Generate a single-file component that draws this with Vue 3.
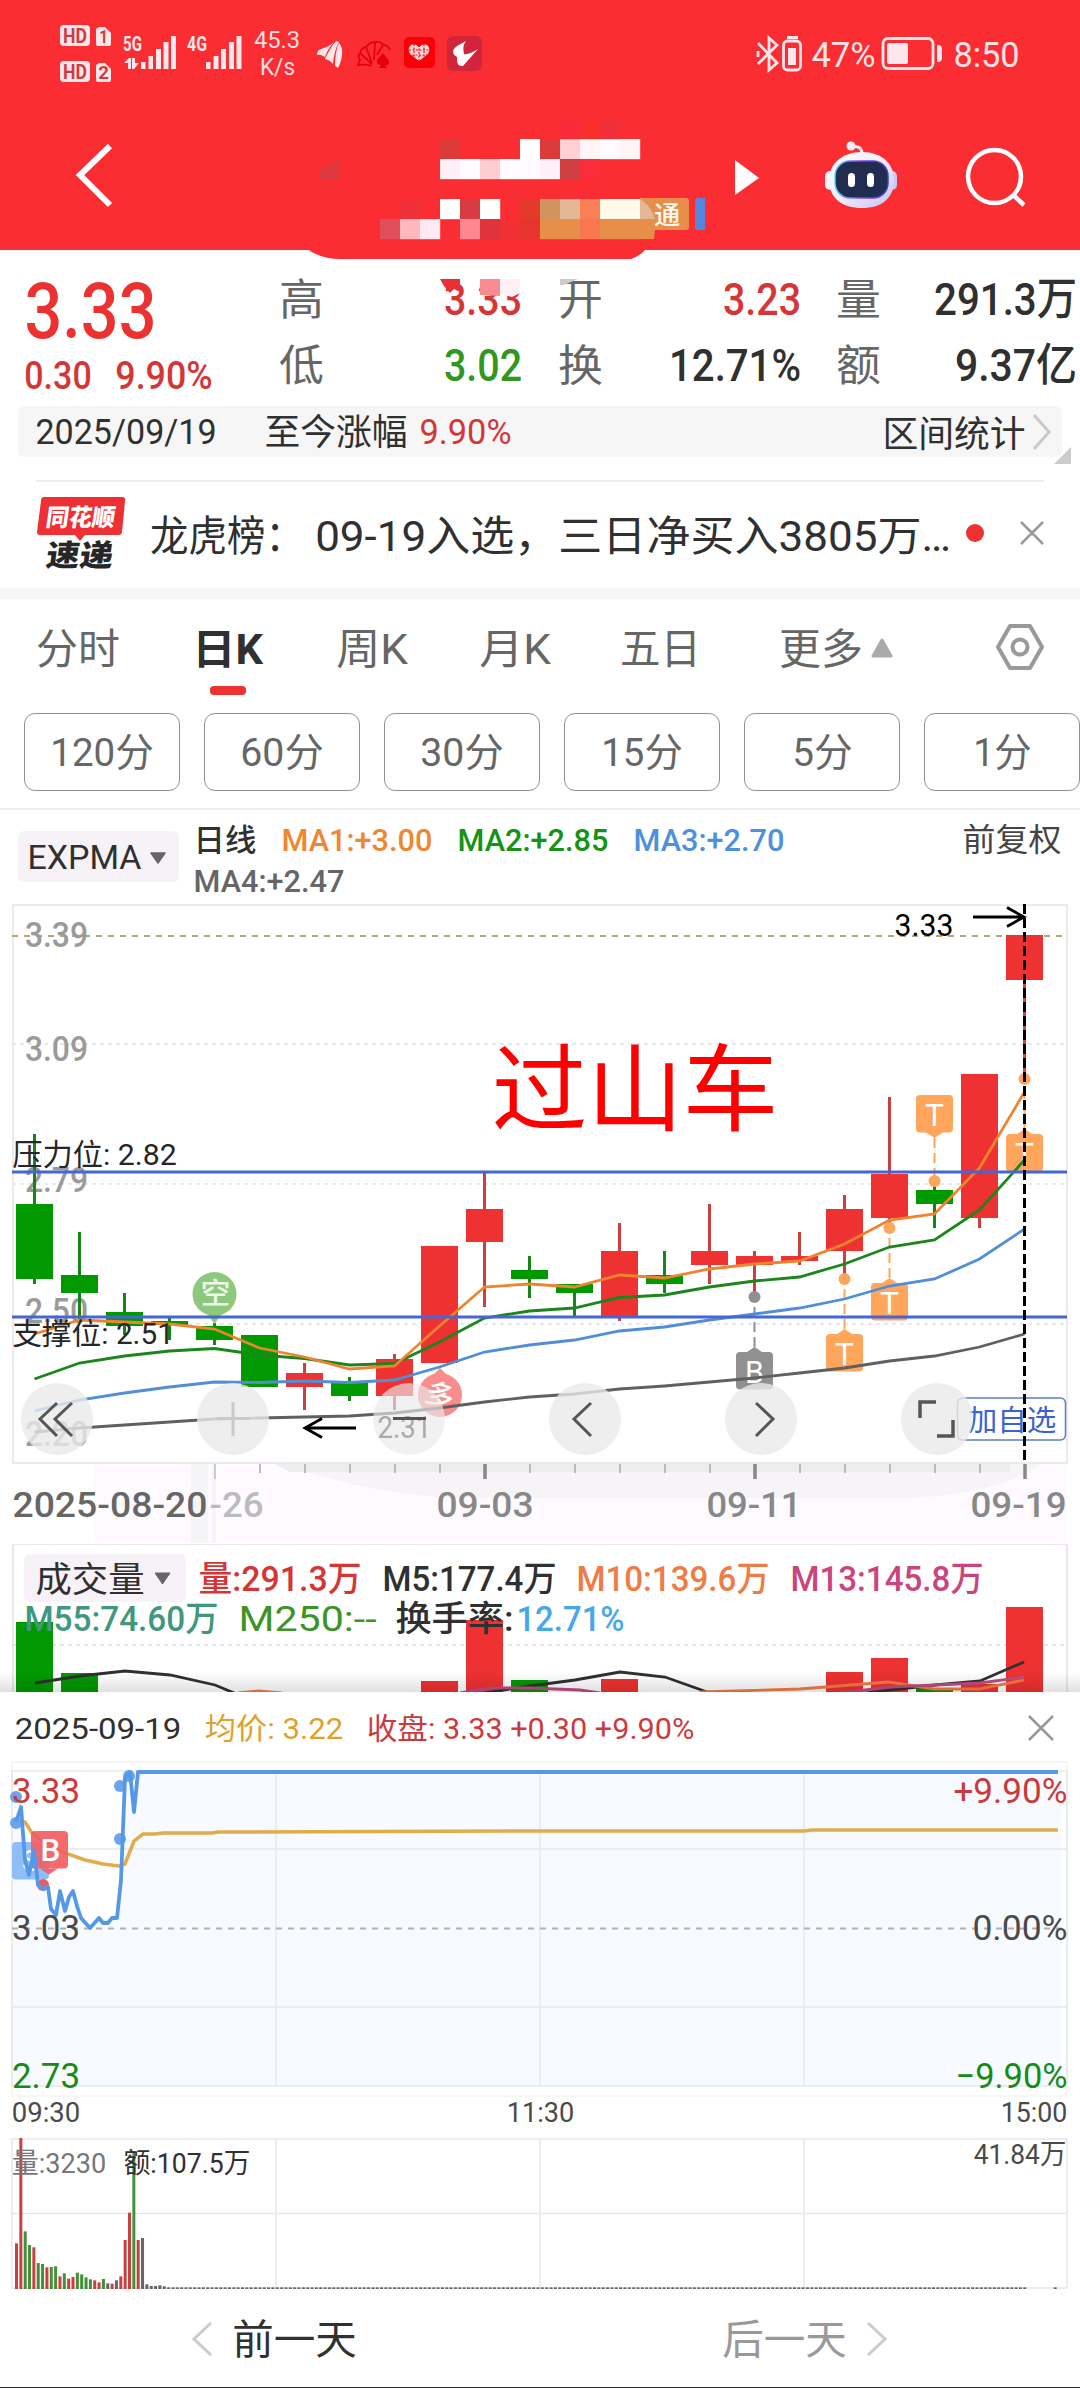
<script setup>
import { h } from 'vue'

/* Text set to an exact drawn width; x/y are the left edge and the baseline. */
const Txt = (p) =>
  h('text', {
    x: p.x - p.s * 0.045,
    y: p.y,
    'font-size': p.s,
    'font-weight': p.b || 400,
    fill: p.c || '#303030',
    textLength: p.w + p.s * 0.09,
    lengthAdjust: 'spacingAndGlyphs',
    'xml:space': 'preserve',
  }, p.t)
Txt.props = ['t', 'x', 'y', 'w', 's', 'c', 'b']

/* Inline box whose height is the cap height of its text. */
const Fit = (p) => {
  const cap = Math.round(p.s * 0.711)
  return h('svg', { width: p.w, height: cap, style: { overflow: 'visible', display: 'block', flex: 'none' } }, [
    h(Txt, { t: p.t, x: 0, y: cap, w: p.w, s: p.s, c: p.c, b: p.b }),
  ])
}
Fit.props = ['t', 'w', 's', 'c', 'b']

const RED = '#ee3131'
const GREEN = '#009900'
const G = '#666'

const mosaic = [
  [440, 139, '#dd3a3a'], [520, 139, '#fff'], [540, 139, '#dd3a3c'], [560, 139, '#ffcfd4'], [580, 139, '#fff5f7'], [600, 139, '#fffafd'], [620, 139, '#fff5f7'],
  [560, 119, '#f92b38'], [580, 119, '#f92f2e'], [600, 119, '#ef3038'],
  [440, 159, '#fff0f8'], [460, 159, '#fffaff'], [480, 159, '#ffcdd0'], [500, 159, '#fffaff'], [520, 159, '#fffaff'], [540, 159, '#fff0f8'], [560, 159, '#cf4045'], [580, 159, '#fb2d3a'],
  [400, 199, '#f03038'], [440, 199, '#fff'], [460, 199, '#d73c42'], [480, 199, '#fff'], [520, 199, '#e5392a'],
  [380, 219, '#de4f5b'], [400, 219, '#ffb8be'], [420, 219, '#ffe8f0'], [460, 219, '#ff8890'], [480, 219, '#de343b'], [500, 219, '#f03133'], [520, 219, '#e6352f'],
  [540, 199, '#d3935f'], [560, 199, '#e3b795'], [580, 199, '#f88054'], [600, 199, '#fff9e8'], [620, 199, '#fff9e8'],
  [540, 219, '#e78e4a'], [560, 219, '#e78e4a'], [580, 219, '#f9774f'], [600, 219, '#e78e4a'], [620, 219, '#e78e4a'],
]

const quotes = [
  [['高', 41, '3.33', 74, '#d43638'], ['开', 41, '3.23', 74, '#d43638'], ['量', 41, '291.3万', 139, '#303030']],
  [['低', 41, '3.02', 74, '#32961f'], ['换', 41, '12.71%', 128, '#303030'], ['额', 41, '9.37亿', 118, '#303030']],
]

const tabs = [['分时', 80], ['日K', 67], ['周K', 68], ['月K', 68], ['五日', 77], ['更多', 80]]
const periods = [['120分', 100], ['60分', 80], ['30分', 80], ['15分', 78], ['5分', 57], ['1分', 55]]

/* index, up?, body top, body bottom, wick top, wick bottom */
const candles = [
  [0, 0, 1204, 1279, 1134, 1284], [1, 0, 1275, 1293, 1232, 1321], [2, 0, 1312, 1326, 1293, 1335], [3, 0, 1321, 1325, 1318, 1340],
  [4, 0, 1326, 1340, 1323, 1345], [5, 0, 1335, 1387, 1335, 1387], [6, 1, 1373, 1387, 1363, 1410], [7, 0, 1383, 1396, 1377, 1401],
  [8, 1, 1359, 1396, 1354, 1410], [9, 1, 1246, 1363, 1246, 1363], [10, 1, 1209, 1242, 1173, 1307], [11, 0, 1270, 1279, 1256, 1298],
  [12, 0, 1284, 1293, 1284, 1316], [13, 1, 1251, 1316, 1223, 1321], [14, 0, 1275, 1284, 1251, 1293], [15, 1, 1251, 1265, 1204, 1284],
  [16, 1, 1256, 1265, 1251, 1297], [17, 1, 1256, 1261, 1232, 1265], [18, 1, 1209, 1251, 1195, 1279], [19, 1, 1174, 1218, 1097, 1228],
  [20, 0, 1190, 1204, 1181, 1228], [21, 1, 1074, 1218, 1074, 1228], [22, 1, 935, 980, 935, 1079],
].map(([i, up, a, b, t, z]) => ({ x: 34.5 + 45 * i, col: up ? RED : GREEN, wick: up ? '#cb3f3f' : '#168516', a, b, t, z }))

const line = (a) => a.map((y, i) => `${34.5 + 45 * i},${y}`).join(' ')
const mas = [
  ['#606060', line([1432, 1428, 1425, 1422, 1419, 1418, 1417, 1416, 1413, 1408, 1402, 1397, 1394, 1389, 1386, 1382, 1378, 1373, 1368, 1361, 1356, 1347, 1334])],
  ['#508fd8', line([1411, 1400, 1393, 1387, 1382, 1382.5, 1381, 1382.5, 1380, 1367, 1352, 1345, 1340, 1331, 1327, 1320, 1314, 1308, 1299, 1286, 1279, 1259, 1229])],
  ['#1b861b', line([1379, 1363, 1356, 1351, 1348.5, 1355, 1358.5, 1365, 1363.5, 1342, 1318, 1311, 1308, 1297.5, 1295, 1287, 1281, 1277, 1264, 1247, 1240, 1210, 1160])],
  ['#ee8430', line([1334, 1320, 1322, 1324, 1329, 1348, 1357, 1369, 1366, 1326, 1287, 1284, 1287, 1275, 1278, 1269, 1264, 1261, 1244, 1220, 1214, 1168, 1092])],
]
const scale = [['3.39', 947], ['3.09', 1061], ['2.79', 1192], ['2.50', 1323], ['2.20', 1446]]

/* badge left, badge top, letter, colour, dot y, tail direction */
const marks = [
  [916, 1095, 'T', '#ffa55c', 1181, 1], [1006, 1134, 'T', '#ffa55c', 1079, -1], [871, 1283, 'T', '#ffa55c', 1228, -1],
  [826, 1334, 'T', '#ffa55c', 1279, -1], [736, 1352, 'B', '#909090', 1297, -1],
].map(([x, y, t, c, d, s]) => ({ x, y, t, c, d, cx: x + 18.5, edge: s > 0 ? y + 37 : y + 1, tip: s > 0 ? y + 43 : y - 5 }))

const ticks = Array.from({ length: 19 }, (_, k) => k + 4).map((i) => ({ x: 35 + 45 * i, big: i > 4 && (i - 4) % 6 === 0, first: i === 4 }))

const volumes = [[0, 0, 1622], [1, 0, 1673], [9, 1, 1681], [10, 1, 1620], [11, 0, 1680], [13, 1, 1679], [18, 1, 1672], [19, 1, 1658], [20, 0, 1688], [21, 1, 1684], [22, 1, 1607]]

const price = '16,1822 21,1807 25,1860 29,1875 34,1850 38,1885 43,1889 48,1887 51,1909 56,1915 60,1891 65,1911 69,1897 73,1891 77,1906 81,1918 90,1928 99,1918 103,1923 108,1923 112,1918 117,1918 121,1880 125,1778 130,1772 134,1812 138,1772 1058,1772'
const average = '16,1822 25,1822 32,1833 45,1843 65,1853 85,1860 103,1864 119,1866 125,1864 134,1841 143,1834 155,1834 163,1833 212,1833 218,1832 540,1831 804,1831 812,1830 1058,1830'

const head = 'r490 r174 g454 g495 r502 g549 g552 r562 g561 g559 r589 g580 r596 r591 g578 g583 g592 g598 r601 r607 g597 k610 r611 k601 r589 r480 r398 g215 r480 k474 k613 k618 k618 k616 k619'.split(' ')
const minuteBars = Array.from({ length: 240 }, (_, i) => {
  const s = head[i] || 'k622'
  return { x: 15 + i * 4.346, y: 2080 + Number(s.slice(1)) / 3, c: { r: '#c84040', g: '#44903a', k: '#666' }[s[0]], i }
}).filter((b) => b.i < 233 || b.i === 239)
</script>

<template>
  <div class="app">
    <header class="top">
      <div class="status">
        <svg width="500" height="105" viewBox="0 0 500 105">
          <g fill="#ffe6ea">
            <rect x="60" y="25" width="30" height="21" rx="4" /><rect x="60" y="61" width="30" height="21" rx="4" />
            <path d="M99 27h6l6 6v11a2 2 0 0 1-2 2H98a2 2 0 0 1-2-2V29zM99 63h6l6 6v11a2 2 0 0 1-2 2H98a2 2 0 0 1-2-2V65z" />
            <path d="M141 62h4.500v7H141zM148.500 56h4.500v13h-4.500zM156 49h5v20h-5zM163.500 42h5v27h-5zM171 36h5v33h-5zM206 62h4.500v7H206zM213.500 56h5v13h-5zM221 49h5v20h-5zM229 42h5v27h-5zM236.500 36h5v33h-5z" />
            <path d="M124 63l5-5h2v11h-3v-6zM132 58h3v5l4 0-5 6h-2z" />
            <path d="M317 55q0-5 4-6 8-2 13-7-7 8-9 15-5-3-8-2zM325 59q5-11 11-18l3 1q-5 9-6 22-3-4-8-5zM335 66q0-15 4-23 4 4 3 12-1 8-4 13-1-1-3-2z" />
          </g>
          <Txt t="HD" :x="64" :y="43" :w="22" :s="21" b="700" c="#cf3a40" /><Txt t="HD" :x="64" :y="79" :w="22" :s="21" b="700" c="#cf3a40" />
          <Txt t="1" :x="100" :y="43" :w="7" :s="19" b="700" c="#cf3a40" /><Txt t="2" :x="99" :y="79" :w="9" :s="19" b="700" c="#cf3a40" />
          <Txt t="5G" :x="124" :y="51" :w="17" :s="21" b="700" c="#ffe6ea" /><Txt t="4G" :x="188" :y="51" :w="18" :s="21" b="700" c="#ffe6ea" />
          <Txt t="45.3" :x="255" :y="48" :w="44" :s="23.500" c="#ffdfe2" /><Txt t="K/s" :x="261" :y="75" :w="33" :s="23.500" c="#ffdfe2" />
          <g fill="none" stroke="#e6000c" stroke-width="1.800">
            <path d="M372 66q-7-2-14-1l2-5q-3-3 0-7 1-5 6-6 4-5 9-5 6-1 8 3 5 0 7 5M360 53l12 11M366 47l6 16M375 42l-1 18M383 45l-6 10" />
          </g>
          <path d="M383 53l6 8q1 5-4 4l2 3h-8l2-3q-5 0-4-5z" fill="#e6000c" />
          <rect x="404" y="37" width="31" height="31" rx="5" fill="#fa0006" />
          <path d="M419 61l-9-7q-3-6 1-9 4-2 8 2 4-4 8-2 4 3 1 9z" fill="#ffd9da" /><path d="M409 50h21M412 55h15M414 44v13M419 45v16M424 44v13" stroke="#fa0006" stroke-width="1.200" stroke-dasharray="2 1.500" />
          <rect x="447" y="36" width="35" height="35" rx="6" fill="#d0253a" />
          <path d="M466 41q-4 5-2 13 5 1 14-5l-15 17q-7 1-6-9-8-5 0-11z" fill="#fff" />
        </svg>
        <svg width="340" height="105" viewBox="740 0 340 105">
          <g fill="none" stroke="#ffe6ea" stroke-width="2.800">
            <path d="M758 43l19 20-8 7V38l8 7-19 19M758 51v6" />
            <rect x="783.500" y="41" width="17" height="29" rx="4" />
            <rect x="883" y="38.500" width="50" height="30" rx="5" />
          </g>
          <path fill="#ffe6ea" d="M787 36h11v3h-11zM788 48h8v17h-8zM889 43h17a2 2 0 0 1 2 2v17a2 2 0 0 1-2 2h-17a2 2 0 0 1-2-2V45a2 2 0 0 1 2-2zM937 45h1a4 4 0 0 1 4 4v9a4 4 0 0 1-4 4h-1z" />
          <Txt t="47%" :x="813" :y="67" :w="61" :s="35" c="#ffe3e6" /><Txt t="8:50" :x="955" :y="67" :w="63" :s="35" c="#ffe3e6" />
        </svg>
      </div>
      <nav class="nav">
        <svg width="290" height="145" viewBox="0 105 290 145"><path d="M110 146L80 175l30 30" fill="none" stroke="#fff" stroke-width="6" /></svg>
        <svg class="title" width="430" height="145" viewBox="290 105 430 145">
          <path d="M307 249q14 10 33 10h291q9-3 15-10z" fill="#f92d32" />
          <path d="M320 179v-9l20-11v20z" fill="#db3a41" />
          <path d="M640 198h46a3 3 0 0 1 3 3v26a3 3 0 0 1-3 3h-32v-11h-14z" fill="#e78e4a" />
          <rect v-for="(m, i) in mosaic" :key="i" :x="m[0]" :y="m[1]" width="20.200" height="20.200" :fill="m[2]" />
          <path d="M640 199q10 5 15 20h-15z" fill="#e3b795" /><path d="M640 219h15v11l-1 9h-14z" fill="#e78e4a" />
          <Txt t="通" :x="655" :y="223.500" :w="24" :s="25" b="500" c="#fff9ef" />
          <path d="M698 198h7v32h-7a3 3 0 0 1-3-3v-26a3 3 0 0 1 3-3z" fill="#5585dc" />
        </svg>
        <svg width="80" height="145" viewBox="720 105 80 145"><path d="M735 160l24 18-24 17z" fill="#fff" /></svg>
        <svg width="140" height="145" viewBox="800 105 140 145">
          <defs>
            <linearGradient id="shell" x1="0" y1="0" x2="1" y2="1"><stop offset="0" stop-color="#fff" /><stop offset=".5" stop-color="#f2edfb" /><stop offset="1" stop-color="#c9bff0" /></linearGradient>
            <linearGradient id="rim" x1="0" y1="0" x2="1" y2="0"><stop offset="0" stop-color="#5ad2f5" /><stop offset=".5" stop-color="#8a3ff0" /><stop offset="1" stop-color="#3540d0" /></linearGradient>
          </defs>
          <path d="M852 147q10-2 10 7" fill="none" stroke="#f4e9f7" stroke-width="3" /><circle cx="851" cy="146" r="4.500" fill="#f8eef8" />
          <rect x="825" y="171" width="12" height="19" rx="5" fill="#f5f2fd" /><rect x="885" y="171" width="12" height="19" rx="5" fill="#cfc6f2" />
          <path d="M862 152c20 0 32 12 32 28 0 18-12 28-32 28s-33-10-33-28c0-16 13-28 33-28z" fill="url(#shell)" />
          <rect x="835" y="161" width="53" height="37" rx="15" fill="#202c50" stroke="url(#rim)" stroke-width="1.500" />
          <rect x="848" y="173" width="7" height="14" rx="3.500" fill="#fff" /><rect x="867" y="173" width="7" height="14" rx="3.500" fill="#fff" />
        </svg>
        <svg width="140" height="145" viewBox="940 105 140 145"><g fill="none" stroke="#fff" stroke-width="4.500"><circle cx="994.500" cy="176.500" r="26.500" /><path d="M1012 194l12 11" /></g></svg>
      </nav>
    </header>

    <section class="quote">
      <div class="last">
        <Fit t="3.33" :w="125" :s="77" b="500" c="#ec3131" />
        <div class="change"><Fit t="0.30" :w="64" :s="38" b="500" c="#d43638" /><Fit t="9.90%" :w="94" :s="38" b="500" c="#d43638" /></div>
      </div>
      <div class="grid">
        <div v-for="(r, k) in quotes" :key="k" class="grow">
          <div v-for="q in r" :key="q[0]" class="pair"><Fit :t="q[0]" :w="q[1]" :s="43" :c="G" /><Fit :t="q[2]" :w="q[3]" :s="45" b="500" :c="q[4]" /></div>
        </div>
      </div>
      <svg class="smudge" width="140" height="18" viewBox="440 279 140 18"><path d="M440 279h20v13l-6-3-4 4-6-7z" fill="#e83035" /><path d="M480 279h20v17l-20-1z" fill="#f88c92" /><path d="M500 279h20v14l-8 4-12-3z" fill="#fff0f5" /><path d="M560 279h18l-14 6h-4z" fill="#ccc" /></svg>
    </section>

    <section class="range">
      <div class="rangebar">
        <Fit t="2025/09/19" :w="178" :s="35" /><Fit t="至今涨幅" :w="140" :s="36" /><Fit t="9.90%" :w="89" :s="35" c="#d43638" />
        <Fit class="stat" t="区间统计" :w="140" :s="36" />
        <svg width="22" height="36" viewBox="1034 414 22 36"><path d="M1036 415l15 17-15 17" fill="none" stroke="#c8c8c8" stroke-width="3" /></svg>
      </div>
      <svg class="corner" width="17" height="17"><path d="M0 17L17 0v17z" fill="#ccc" /></svg>
    </section>

    <section class="news">
      <svg width="90" height="74" viewBox="36 496 90 74">
        <path d="M44 497h78q4 0 3 4l-3 31q0 3-4 3H85l-5 6-5-6H40q-3 0-3-3l4-31q0-4 3-4z" fill="#ee3034" />
        <g transform="skewX(-8)"><Txt t="同花顺" :x="120" :y="526" :w="67" :s="24" b="900" c="#fff" /><Txt t="速递" :x="126" :y="566" :w="64" :s="30" b="900" c="#262626" /></g>
      </svg>
      <Fit class="headline" t="龙虎榜：" :w="150" :s="42" />
      <Fit class="headline rest" t="09-19入选，三日净买入3805万…" :w="632" :s="42" />
      <i class="dot"></i>
      <svg width="24" height="24"><path d="M1 1l22 22M23 1L1 23" stroke="#999" stroke-width="2.500" /></svg>
    </section>

    <section class="tabs">
      <div v-for="(t, i) in tabs" :key="t[0]" class="tab">
        <Fit :t="t[0]" :w="t[1]" :s="42" :b="i === 1 ? 700 : 400" :c="i === 1 ? '#303030' : G" /><i v-if="i === 1"></i>
      </div>
      <svg width="24" height="20"><path d="M12 2l9 16H3z" fill="#aaa" stroke="#aaa" stroke-width="3" stroke-linejoin="round" /></svg>
      <svg class="gear" width="50" height="50" viewBox="0 0 50 50"><g fill="none" stroke="#999" stroke-width="4"><path d="M15 4h20l12 21-12 21H15L3 25z" stroke-linejoin="round" /><circle cx="25" cy="25" r="7.500" /></g></svg>
    </section>

    <section class="periods"><div v-for="p in periods" :key="p[0]" class="period"><Fit :t="p[0]" :w="p[1]" :s="39" :c="G" /></div></section>

    <section class="legend">
      <div class="pick"><Fit t="EXPMA" :w="111" :s="33" /><svg width="18" height="12"><path d="M2 1h14l-7 10z" fill="#666" stroke="#666" stroke-width="1.500" stroke-linejoin="round" /></svg></div>
      <div class="mas">
        <div class="marow"><Fit t="日线" :w="60" :s="31" b="500" /><Fit t="MA1:+3.00" :w="148" :s="32" b="500" c="#ee8730" /><Fit t="MA2:+2.85" :w="148" :s="32" b="500" c="#159315" /><Fit t="MA3:+2.70" :w="148" :s="32" b="500" c="#4f90dc" /></div>
        <Fit t="MA4:+2.47" :w="148" :s="32" b="500" :c="G" />
      </div>
      <Fit class="adj" t="前复权" :w="96" :s="32" c="#444" />
    </section>

    <svg class="block" width="1080" height="640" viewBox="0 904 1080 640">
      <path d="M95 1464h972v79H95z" fill="#fefaff" /><path d="M275 1464h765q-40 30-130 34H450q-60-4-110-17z" fill="#f6f4f6" /><path d="M191 1464h17v79h-17zM212 1464h4v79h-4z" fill="#f5f4f6" /><path d="M275 1464h735v8H290z" fill="#eeecef" />
      <path d="M13 1463V905H1067V1463z" fill="#fff" stroke="#ebebeb" stroke-width="2" />
      <path d="M12 936H1067" stroke="#b5a878" stroke-width="2" stroke-dasharray="6 6" />
      <path d="M12 1044H1067M12 1184H1067M12 1324H1067" stroke="#e9e9e9" stroke-width="2" stroke-dasharray="4 4" />
      <Txt v-for="s in scale" :key="s[0]" :t="s[0]" :x="26.500" :y="s[1]" :w="60" :s="35.500" b="500" c="#9a9a9a" />
      <g v-for="c in candles" :key="c.x"><path :d="`M${c.x} ${c.t}V${c.z}`" :stroke="c.wick" stroke-width="3" /><rect :x="c.x - 18.500" :y="c.a" width="37" :height="c.b - c.a" :fill="c.col" /></g>
      <g v-for="m in marks" :key="m.x">
        <path :d="`M${m.cx} ${m.tip}V${m.d}`" :stroke="m.c" stroke-width="2" stroke-dasharray="10 5" /><circle :cx="m.cx" :cy="m.d" r="6" :fill="m.c" />
        <path :d="`M${m.cx - 9} ${m.edge}L${m.cx} ${m.tip}L${m.cx + 9} ${m.edge}z`" :fill="m.c" /><rect :x="m.x" :y="m.y" width="37" height="37.500" rx="4" :fill="m.c" />
        <Txt :t="m.t" :x="m.cx - 8" :y="m.y + 31" :w="16" :s="32" c="#fff" />
      </g>
      <g fill="#8dc87c"><circle cx="214.500" cy="1294" r="22" /><path d="M206 1312l8.500 12 8.500-12z" /></g><Txt t="空" :x="202" :y="1304" :w="27" :s="29" b="500" c="#edfae9" />
      <g fill="#f98c8c"><circle cx="440" cy="1395" r="22" /><path d="M431 1377l9-9 9 9z" /></g><g transform="rotate(18 440 1395)"><Txt t="多" :x="427" :y="1405" :w="26" :s="28" b="500" c="#fff" /></g>
      <polyline v-for="m in mas" :key="m[0]" :points="m[1]" fill="none" :stroke="m[0]" stroke-width="2.800" />
      <path d="M12 1172H1067M12 1317H1067" stroke="#4466d8" stroke-width="3" />
      <Txt t="压力位: 2.82" :x="13.500" :y="1165" :w="162" :s="30" c="#262626" /><Txt t="支撑位: 2.51" :x="13.500" :y="1344" :w="159" :s="30" c="#262626" />
      <Txt t="过山车" :x="496" :y="1124" :w="278" :s="95" c="#fe0000" />
      <Txt t="3.33" :x="896" :y="936" :w="56" :s="31" c="#000" />
      <g fill="none" stroke="#000" stroke-width="2.800"><path d="M973 917h50M1007 907.500l17 9.500-17 9.500M356 1428h-51M322 1418.500l-17 9.500 17 9.500" /></g>
      <Txt t="2.31" :x="379" :y="1438" :w="51" :s="31" c="#333" />
      <rect x="957.500" y="1398" width="108" height="42" rx="5" fill="#fff" fill-opacity=".7" stroke="#5a80c8" stroke-width="1.500" /><Txt t="加自选" :x="969" :y="1431" :w="86" :s="29" c="#3b62d4" />
      <path d="M1024.500 904V1463" stroke="#000" stroke-width="3" stroke-dasharray="10 4" />
      <circle v-for="i in 6" :key="i" :cx="57 + 176 * (i - 1)" cy="1419" r="36" fill="#eaeaea" :fill-opacity="i === 3 ? 0.65 : 0.8" />
      <g fill="none" stroke="#555" stroke-width="3"><path d="M57 1403l-17 16 17 17M72 1403l-17 16 17 17M591 1403l-17 16 17 17M756 1403l17 16-17 17M393 1418.500h33" /><path d="M920 1418v-16h16M953 1420v16h-16" stroke-width="3.500" /></g>
      <path d="M233 1402v34M217 1418.500h32" stroke="#c9c9c9" stroke-width="3" />
      <path v-for="t in ticks" :key="t.x" :d="`M${t.x} 1464v${t.big || t.first ? 15 : 9}`" :stroke="t.big ? '#888' : t.first ? '#ccc' : '#bbb'" :stroke-width="t.big ? 3.500 : 2" />
      <Txt t="2025-08-20" :x="14" :y="1517" :w="192" :s="35" b="500" c="#666" /><Txt t="-26" :x="211" :y="1517" :w="51" :s="35" b="500" c="#bbb" />
      <Txt t="09-03" :x="438" :y="1517" :w="94" :s="35" b="500" c="#888" /><Txt t="09-11" :x="708" :y="1517" :w="92" :s="35" b="500" c="#888" /><Txt t="09-19" :x="972" :y="1517" :w="93" :s="35" b="500" c="#888" />
    </svg>

    <svg class="block" width="1080" height="148" viewBox="0 1544 1080 148">
      <defs><linearGradient id="shade" x1="0" y1="0" x2="0" y2="1"><stop offset="0" stop-color="#000" stop-opacity="0" /><stop offset="1" stop-color="#000" stop-opacity=".12" /></linearGradient></defs>
      <path d="M13 1700V1544H1067V1700" fill="none" stroke="#ebe8ec" stroke-width="2" />
      <path d="M12 1645H1067" stroke="#ddd" stroke-width="1.500" stroke-dasharray="4 4" />
      <rect x="24" y="1554" width="162" height="48" rx="6" fill="#f6f2f7" />
      <rect v-for="v in volumes" :key="v[0]" :x="16 + 45 * v[0]" :y="v[2]" width="37" height="90" :fill="v[1] ? RED : GREEN" />
      <g fill="none" stroke-width="2.800">
        <path d="M35 1683l45-7 45-5 45 4 45 10 24 10M485 1693l45-7 45-6 45-8 45 5 45 16M840 1696l50-6 45-5 45-4 44-19" stroke="#303030" />
        <path d="M238 1693l20-2 24 2M700 1692l100-3 89-7 45 7h45l45-9" stroke="#f67a44" /><path d="M460 1693l30-5h40l50 2 20 3M840 1693l50-6 90-4 44-6" stroke="#c14a80" />
      </g>
      <Txt t="成交量" :x="37" :y="1592" :w="106" :s="35" /><path d="M155 1573h15l-7.500 11z" fill="#666" stroke="#666" stroke-linejoin="round" />
      <Txt t="量:291.3万" :x="200" :y="1591" :w="160" :s="35" b="500" c="#d43638" /><Txt t="M5:177.4万" :x="384" :y="1591" :w="171" :s="35" b="500" /><Txt t="M10:139.6万" :x="578" :y="1591" :w="190" :s="35" b="500" c="#ee7c45" /><Txt t="M13:145.8万" :x="792" :y="1591" :w="190" :s="35" b="500" c="#cb447c" />
      <Txt t="M55:74.60万" :x="26" :y="1631" :w="191" :s="35" b="500" c="#40977e" /><Txt t="M250:--" :x="240" :y="1631" :w="135" :s="35" c="#3c9424" /><Txt t="换手率:" :x="397" :y="1631" :w="115" :s="35" b="500" /><Txt t="12.71%" :x="518" :y="1631" :w="105" :s="35" b="500" c="#46a8e8" />
      <rect x="0" y="1672" width="1080" height="20" fill="url(#shade)" />
    </svg>

    <section class="sheet">
      <div class="sheethead">
        <Fit t="2025-09-19" :w="164" :s="30" /><Fit t="均价: 3.22" :w="136" :s="30" c="#dfa12c" /><Fit t="收盘: 3.33 +0.30 +9.90%" :w="325" :s="30" c="#cc3a3c" />
        <svg class="close" width="26" height="26"><path d="M1 1l24 24M25 1L1 25" stroke="#999" stroke-width="2.500" /></svg>
      </div>
      <svg class="block" width="1080" height="540" viewBox="0 1760 1080 540">
        <path d="M12 1762H1067V2096H12z" fill="none" stroke="#f4f4f4" stroke-width="1.500" />
        <polygon :points="price + ' 1062,1772 1062,2086 13,2086 13,1822'" fill="#f7faff" />
        <path d="M12 1771H1067V2086H12zM12 1849H1067M12 2007H1067M276 1771V2086M540 1771V2086M804 1771V2086" fill="none" stroke="#e6e8ed" stroke-width="1.500" />
        <path d="M12 1928.500H1067" stroke="#aeb0b4" stroke-width="2.200" stroke-dasharray="6 6" />
        <polyline :points="average" fill="none" stroke="#e0ac4c" stroke-width="3.500" />
        <rect x="12" y="1842" width="37" height="37.500" rx="4" fill="#8fbef6" /><Txt t="S" :x="23" :y="1871" :w="16" :s="30" c="#fff" />
        <g fill="#f26063" fill-opacity=".93"><rect x="31" y="1831" width="37" height="37.500" rx="4" /><path d="M40 1868.500h18l-9 6z" /></g><circle cx="43" cy="1885" r="6" fill="#e95c60" />
        <g fill="#6ba5ee"><circle cx="16" cy="1797" r="6" /><circle cx="16" cy="1823" r="6" /><circle cx="120" cy="1786" r="6" /><circle cx="129" cy="1776" r="6" /><circle cx="120" cy="1839" r="6" /></g>
        <polyline :points="price" fill="none" stroke="#5598e8" stroke-width="3.800" stroke-linejoin="round" />
        <Txt t="B" :x="42" :y="1861" :w="17" :s="31" b="500" c="#fff" />
        <Txt t="3.33" :x="13.500" :y="1803" :w="65" :s="35" c="#cb3a3a" /><Txt t="3.03" :x="13.500" :y="1940" :w="65" :s="35" c="#4a4a4a" /><Txt t="2.73" :x="13.500" :y="2088" :w="65" :s="35" c="#168c16" />
        <Txt t="+9.90%" :x="955" :y="1803" :w="111" :s="35" c="#cb3a3a" /><Txt t="0.00%" :x="974" :y="1940" :w="92" :s="35" c="#4a4a4a" /><Txt t="−9.90%" :x="957" :y="2088" :w="109" :s="35" c="#168c16" />
        <Txt t="09:30" :x="13" :y="2122" :w="66" :s="28" c="#4a4a4a" /><Txt t="11:30" :x="508" :y="2122" :w="65" :s="28" c="#4a4a4a" /><Txt t="15:00" :x="1002" :y="2122" :w="64" :s="28" c="#4a4a4a" />
        <path d="M12 2139H1067V2288H12zM12 2213.500H1067M276 2139V2288M540 2139V2288M804 2139V2288" fill="none" stroke="#e8e8e8" stroke-width="1.500" />
        <rect v-for="b in minuteBars" :key="b.i" :x="b.x" :y="b.y" width="3" :height="2289 - b.y" :fill="b.c" />
        <Txt t="量:3230" :x="13" :y="2173" :w="92" :s="28" c="#777" /><Txt t="额:107.5万" :x="125" :y="2173" :w="124" :s="28" /><Txt t="41.84万" :x="975" :y="2164" :w="90" :s="28" c="#4a4a4a" />
      </svg>
      <footer class="days">
        <svg width="20" height="34"><path d="M19 1L2 17l17 16" fill="none" stroke="#ccc" stroke-width="3" /></svg><Fit t="前一天" :w="121" :s="41" />
        <Fit class="next" t="后一天" :w="121" :s="41" c="#999" /><svg width="20" height="34"><path d="M1 1l17 16L1 33" fill="none" stroke="#ccc" stroke-width="3" /></svg>
      </footer>
    </section>
  </div>
</template>

<style>
body { margin: 0; background: #fff; }
</style>

<style scoped>
.app { width: 1080px; height: 2388px; overflow: hidden; background: #fff; font-family: Roboto, "Noto Sans CJK SC", sans-serif; display: flex; flex-direction: column; }
.app * { box-sizing: border-box; }
.app > * { flex: none; }
svg { flex: none; display: block; }
.top { height: 250px; background: #f92d32; }
.status { height: 105px; display: flex; justify-content: space-between; }
.nav { display: flex; height: 145px; }
.title { overflow: visible; }
.quote { position: relative; height: 156px; padding: 33px 0 0 28px; display: flex; }
.last { width: 253px; }
.change { display: flex; gap: 27px; margin: 24px 0 0 -2px; }
.grid { display: flex; flex-direction: column; gap: 34px; }
.grow { display: flex; gap: 39.5px; }
.pair { width: 239px; display: flex; justify-content: space-between; align-items: flex-end; }
.pair:last-child { width: 237px; }
.smudge { position: absolute; left: 440px; top: 29px; }
.range { position: relative; height: 76px; margin: 0 36px; border-bottom: 2px solid #eee; }
.rangebar { height: 51px; margin: 0 -18px; padding: 0 8px 0 19px; background: #f6f6f6; border-radius: 6px; display: flex; align-items: center; }
.rangebar > :nth-child(2) { margin-left: 51px; }
.rangebar > :nth-child(3) { margin-left: 15px; }
.rangebar > .stat { margin: 5px 8px 0 auto; }
.corner { position: absolute; right: -27px; top: 41px; }
.news { height: 117px; padding: 14px 36px 11px; border-bottom: 11px solid #f6f6f6; display: flex; align-items: flex-start; }
.headline { margin: 25px 0 0 26px; }
.rest { margin-left: 15px; }
.dot { width: 18px; height: 18px; border-radius: 50%; background: #ee3131; margin: 28px 36px 0 17px; flex: none; }
.news > :last-child { margin-top: 25px; }
.tabs { height: 114px; display: flex; padding: 35px 36px 0 38px; }
.tab { margin-right: 76px; }
.tab:nth-child(2) { margin-right: 77px; }
.tab:nth-child(3) { margin-right: 75px; }
.tab:nth-child(4) { margin-right: 73px; }
.tab:nth-child(5) { margin-right: 82px; }
.tab:nth-child(6) { margin-right: 9px; }
.tab i { display: block; width: 36px; height: 9px; border-radius: 4px; background: #ee3131; margin: 22px 0 0 16px; }
.tabs > svg { margin-top: 4px; }
.tabs > .gear { margin: -12px -1px 0 auto; }
.periods { height: 97px; padding-left: 24px; display: flex; gap: 24px; border-bottom: 2px solid #eee; }
.period { flex: none; width: 156px; height: 78px; border: 1.5px solid #909090; border-radius: 11px; display: flex; align-items: center; justify-content: center; }
.legend { height: 94px; padding: 18px 20px 0 18px; display: flex; align-items: flex-start; }
.pick { width: 161px; height: 51px; margin-top: 3px; padding: 2px 0 0 11px; background: #f6f2f7; border-radius: 6px; display: flex; align-items: center; gap: 9px; }
.mas { margin-left: 16px; display: flex; flex-direction: column; gap: 18px; }
.marow { display: flex; gap: 28px; align-items: flex-end; }
.adj { margin-left: auto; }
.sheet { height: 696px; background: #fff; border-bottom: 1px solid #333; }
.sheethead { height: 68px; padding: 26px 26px 0 16px; display: flex; gap: 26px; align-items: flex-start; }
.close { margin: -3px 0 0 auto; }
.days { display: flex; align-items: center; height: 78px; padding-left: 192px; gap: 22px; }
.next { margin-left: 347px; }
</style>
